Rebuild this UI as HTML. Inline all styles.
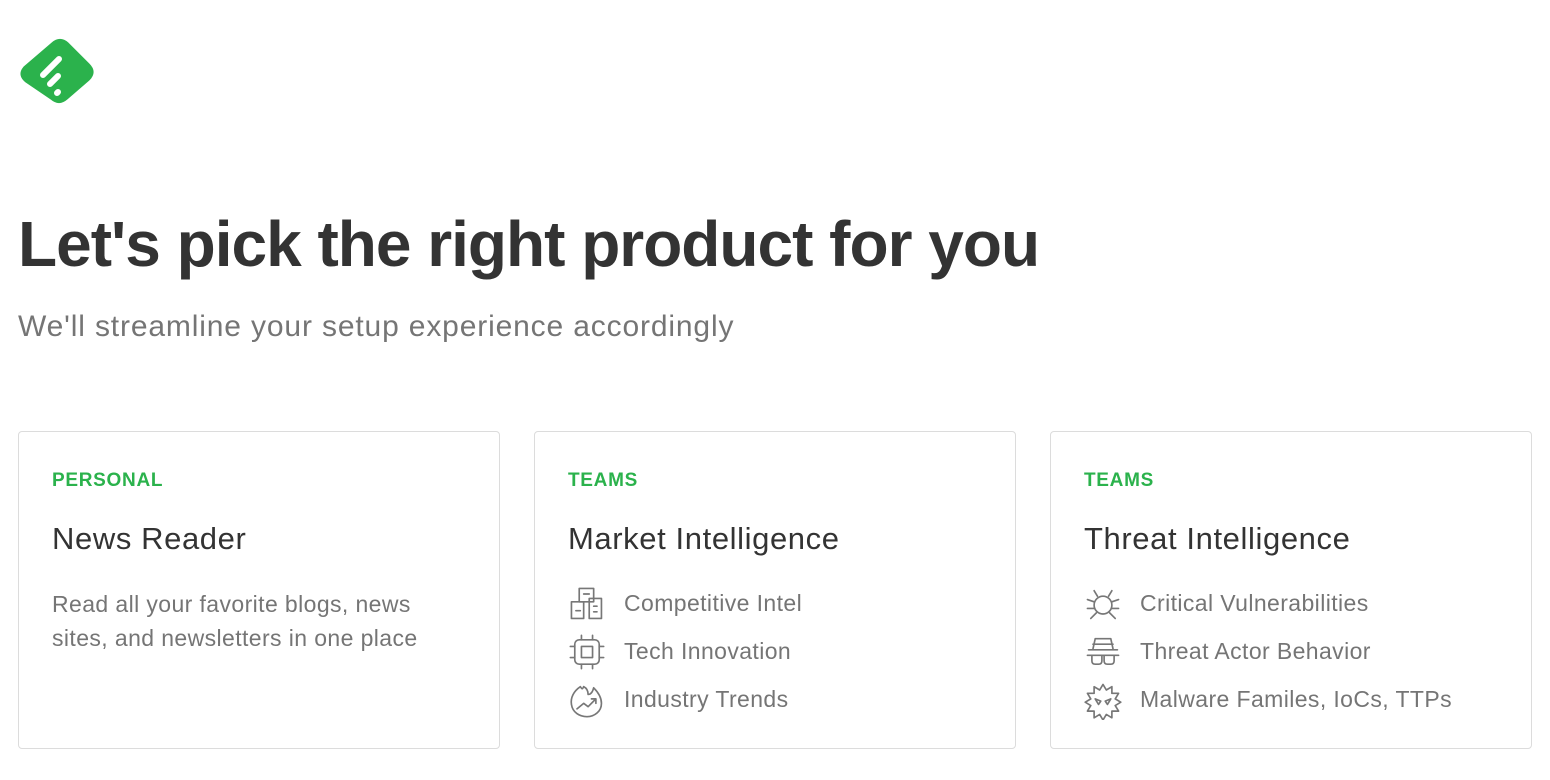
<!DOCTYPE html>
<html><head><style>
body{margin:0;width:1550px;height:780px;background:#fff;font-family:"Liberation Sans",Arial,sans-serif;position:relative;overflow:hidden}
.a{position:absolute;line-height:1;white-space:nowrap}
.card{position:absolute;top:431px;width:480px;height:316px;border:1px solid #dcdcdc;border-radius:4px;box-sizing:content-box}
.lbl{color:#2bb24c;font-weight:bold;font-size:19px;letter-spacing:0.7px;left:33px;top:39px}
.ttl{color:#333;font-size:31px;letter-spacing:0.6px;left:33px;top:91px}
.txt{color:#757575;font-size:23px;letter-spacing:0.4px}
svg.i{position:absolute;left:32px;width:40px;height:40px;fill:none;stroke:#777;stroke-width:1.5;stroke-linecap:round;stroke-linejoin:round}
</style></head><body>
<svg style="position:absolute;left:0;top:0" width="120" height="120" viewBox="0 0 120 120">
<path d="M25 68 L53 44 Q60 38 67 44 L88 65 Q95 72 88 79 L66 98 Q59 104 52 98 L27 81 Q19 75 25 68Z" fill="#2bb24c" stroke="#2bb24c" stroke-width="4" stroke-linejoin="round"/>
<g stroke="#fff" stroke-width="6" stroke-linecap="round">
<path d="M43 75 L59 59"/>
<path d="M50 84 L58 76"/>
<path d="M57 93 L58 92"/>
</g>
</svg>
<div class="a" style="left:18px;top:212px;font-size:64px;font-weight:bold;color:#333;letter-spacing:-1px">Let's pick the right product for you</div>
<div class="a" style="left:18px;top:312px;font-size:30px;letter-spacing:0.85px;color:#757575">We'll streamline your setup experience accordingly</div>

<div class="card" style="left:18px">
<div class="a lbl">PERSONAL</div>
<div class="a ttl">News Reader</div>
<div class="a txt" style="left:33px;top:155px;line-height:34px">Read all your favorite blogs, news<br>sites, and newsletters in one place</div>
</div>

<div class="card" style="left:534px">
<div class="a lbl">TEAMS</div>
<div class="a ttl">Market Intelligence</div>
<svg class="i" style="top:152px" viewBox="0 0 36 36"><rect x="11" y="4" width="13" height="12"/><rect x="4" y="16" width="11" height="15"/><rect x="20" y="13" width="11" height="18"/><path d="M15 9h5M8 24h4M24 20h3M24 25h3"/></svg>
<div class="a txt" style="left:89px;top:160px">Competitive Intel</div>
<svg class="i" style="top:200px" viewBox="0 0 36 36"><rect x="7" y="7" width="22" height="22" rx="4"/><rect x="13" y="13" width="10" height="10"/><path d="M13 3v4M23 3v4M13 29v4M23 29v4M3 13h4M3 23h4M29 13h4M29 23h4"/></svg>
<div class="a txt" style="left:89px;top:208px">Tech Innovation</div>
<svg class="i" style="top:248px" viewBox="0 0 36 36"><path d="M12 6C6 10 3 16 4 22c1 7 7 11 14 11s13-5 13-12c0-6-4-11-7-14-1 4-3 6-5 6 0-4-2-6-4-7-1 2-1 3-3 0z"/><path d="M9 26l6-5 4 3 7-7M22 17h4v4"/></svg>
<div class="a txt" style="left:89px;top:256px">Industry Trends</div>
</div>

<div class="card" style="left:1050px">
<div class="a lbl">TEAMS</div>
<div class="a ttl">Threat Intelligence</div>
<svg class="i" style="top:152px" viewBox="0 0 36 36"><circle cx="18" cy="19" r="8"/><path d="M13 11l-3-5M23 11l3-5M10 16l-6-2M26 16l6-2M10 22H4M26 22h6M12 26l-5 5M24 26l5 5"/></svg>
<div class="a txt" style="left:89px;top:160px">Critical Vulnerabilities</div>
<svg class="i" style="top:200px" viewBox="0 0 36 36"><path d="M9 15l2-9h14l2 9M5 16h26M9 11h18"/><path d="M4 21h28M8 21v5c0 2 1 3 3 3h3c2 0 3-1 3-3v-5M19 21v5c0 2 1 3 3 3h3c2 0 3-1 3-3v-5"/></svg>
<div class="a txt" style="left:89px;top:208px">Threat Actor Behavior</div>
<svg class="i" style="top:248px" viewBox="0 0 36 36"><path d="M18 4l3 5 5-3 0 6 6 0-3 5 5 3-5 3 3 5-6 0 0 6-5-3-3 5-3-5-5 3 0-6-6 0 3-5-5-3 5-3-3-5 6 0 0-6 5 3z"/><path d="M11 17l5 2-2 3zM25 17l-5 2 2 3z"/></svg>
<div class="a txt" style="left:89px;top:256px">Malware Familes, IoCs, TTPs</div>
</div>
</body></html>
